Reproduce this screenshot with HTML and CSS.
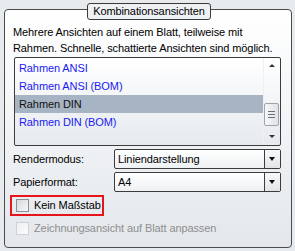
FILE: index.html
```html
<!DOCTYPE html>
<html lang="de">
<head>
  <meta charset="UTF-8">
  <title>Kombinationsansichten</title>
  <link rel="stylesheet" href="styles.css">
</head>
<body>

<div class="group">
  <div class="tab">Kombinationsansichten</div>
  <div class="desc">Mehrere Ansichten auf einem Blatt, teilweise mit<br>Rahmen. Schnelle, schattierte Ansichten sind möglich.</div>

  <div class="list">
    <div class="rows">
      <div class="row">Rahmen ANSI</div>
      <div class="row">Rahmen ANSI (BOM)</div>
      <div class="row selected">Rahmen DIN</div>
      <div class="row">Rahmen DIN (BOM)</div>
    </div>
    <div class="scrollbar">
      <div class="arrow up"></div>
      <div class="thumb"><span></span><span></span><span></span></div>
      <div class="arrow down"></div>
    </div>
  </div>

  <div class="field">
    <div class="label">Rendermodus:</div>
    <div class="combo"><span class="value">Liniendarstellung</span><span class="drop"></span></div>
  </div>
  <div class="field">
    <div class="label">Papierformat:</div>
    <div class="combo"><span class="value">A4</span><span class="drop"></span></div>
  </div>

  <div class="highlight">
    <div class="check"><span class="box"></span>Kein Maßstab</div>
  </div>
  <div class="check disabled"><span class="box"></span>Zeichnungsansicht auf Blatt anpassen</div>
</div>

</body>
</html>
```

FILE: styles.css
```css
body {
  margin: 0;
  width: 295px;
  height: 251px;
  overflow: hidden;
  background: #e7ebee;
  font-family: 'Liberation Sans', Arial, sans-serif;
  font-size: 11px;
  letter-spacing: -0.1px;
  color: #000;
}
.group {
  position: relative;
  box-sizing: border-box;
  margin: 9px 3px 0 4px;
  height: 239px;
  border: 1px solid #4b4b4b;
  border-radius: 4px;
  background: linear-gradient(#ffffff 0%, #f4f6f8 40%, #e3e7eb 100%);
}
.tab {
  position: absolute;
  top: -7px;
  left: 82px;
  box-sizing: border-box;
  width: 124px;
  height: 17px;
  line-height: 15px;
  text-align: center;
  border: 1px solid #3a3a3a;
  border-radius: 3px;
  background: #eef1f4;
}
.desc {
  margin: 14px 0 0 8px;
  line-height: 16px;
}
.list {
  display: flex;
  box-sizing: border-box;
  margin: 1px 0 0 9px;
  width: 267px;
  height: 89px;
  border: 1px solid #3c3c3c;
  border-radius: 2px;
  background: linear-gradient(#ffffff, #e6eaee);
}
.rows {
  flex: 1;
  padding-top: 1px;
}
.row {
  height: 18px;
  line-height: 18px;
  padding-left: 4px;
  color: #1a1af2;
}
.row.selected {
  background: #a6b4c3;
  color: #111;
}
.scrollbar {
  position: relative;
  width: 16px;
  border-left: 1px solid #eef0f2;
}
.arrow {
  position: absolute;
  left: 5px;
  width: 0;
  height: 0;
  border-left: 3px solid transparent;
  border-right: 3px solid transparent;
}
.arrow.up {
  top: 6px;
  border-bottom: 3px solid #333;
}
.arrow.down {
  bottom: 7px;
  border-top: 3px solid #333;
}
.thumb {
  position: absolute;
  top: 45px;
  left: 0;
  box-sizing: border-box;
  width: 15px;
  height: 23px;
  border: 1px solid #9ea4aa;
  border-radius: 2px;
  background: linear-gradient(90deg, #f6f7f8, #dfe3e7);
  display: flex;
  flex-direction: column;
  justify-content: center;
  align-items: center;
  gap: 2px;
}
.thumb span {
  display: block;
  width: 7px;
  height: 1px;
  background: #6a6f74;
}
.field {
  display: flex;
  align-items: center;
  margin-top: 3px;
  height: 20px;
}
.label {
  width: 101px;
  padding-left: 8px;
}
.combo {
  display: flex;
  box-sizing: border-box;
  width: 167px;
  height: 20px;
  border: 1px solid #3c3c3c;
  border-radius: 2px;
  background: linear-gradient(#ffffff, #eef1f3);
}
.combo .value {
  flex: 1;
  line-height: 18px;
  padding-left: 3px;
}
.combo .drop {
  position: relative;
  box-sizing: border-box;
  width: 16px;
  border-left: 1px solid #3c3c3c;
  background: linear-gradient(#f8f9fa, #e2e5e8);
}
.combo .drop::after {
  content: "";
  position: absolute;
  left: 4px;
  top: 7px;
  border-left: 3px solid transparent;
  border-right: 3px solid transparent;
  border-top: 4px solid #111;
}
.highlight {
  box-sizing: border-box;
  margin: 3px 0 0 5px;
  width: 94px;
  height: 21px;
  border: 2px solid #e8141c;
  padding: 2px 0 0 4px;
}
.check {
  display: flex;
  align-items: center;
  gap: 5px;
  height: 13px;
  line-height: 13px;
  white-space: nowrap;
}
.check .box {
  flex: none;
  box-sizing: border-box;
  width: 13px;
  height: 13px;
  border: 1px solid #8c9095;
  background: linear-gradient(135deg, #d6d9dc, #f7f8f9);
}
.check.disabled {
  margin: 6px 0 0 11px;
  color: #8e8e8e;
}
.check.disabled .box {
  border-color: #cfd2d5;
  background: linear-gradient(135deg, #eef0f2, #fbfbfc);
}
```
